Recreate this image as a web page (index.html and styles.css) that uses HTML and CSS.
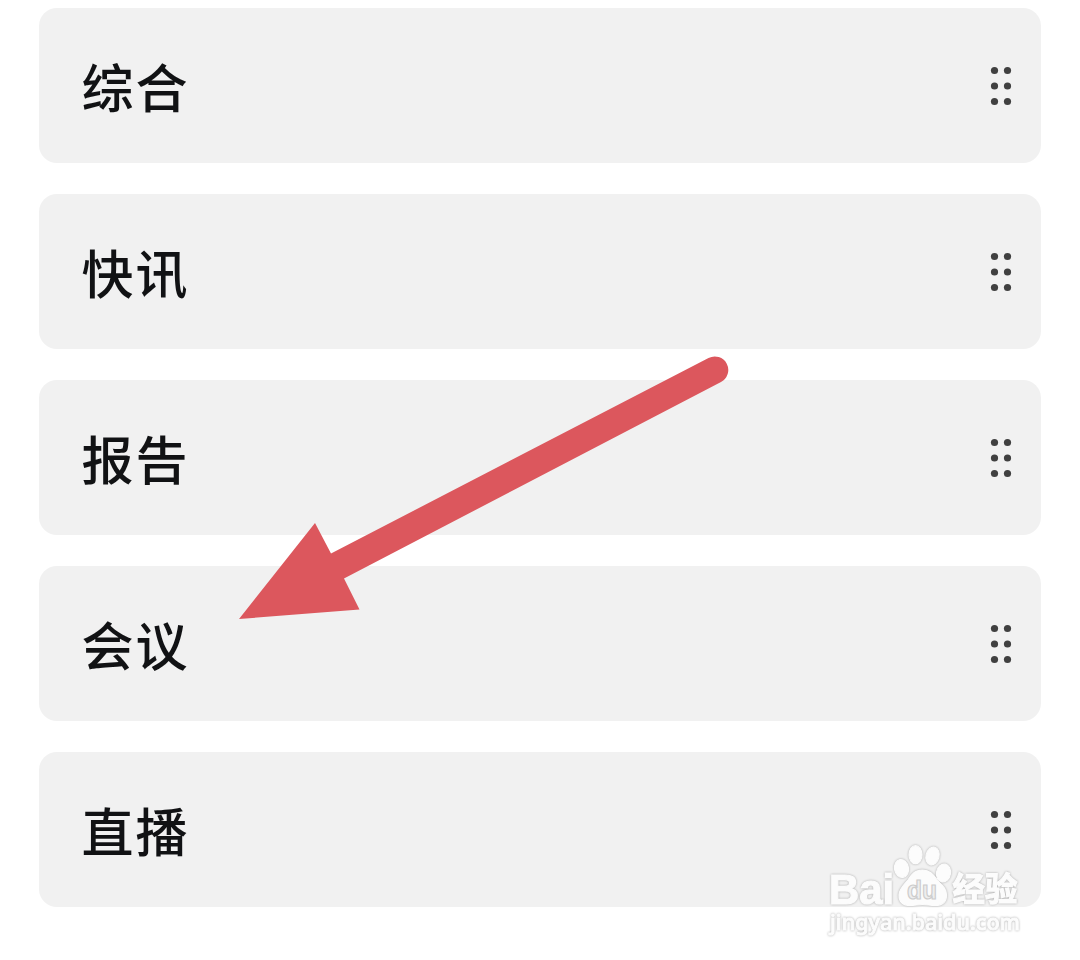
FILE: index.html
```html
<!DOCTYPE html>
<html lang="zh-CN">
<head>
  <meta charset="UTF-8" />
  <meta name="viewport" content="width=device-width,initial-scale=1.0" />
  <title>频道管理</title>
  <link rel="stylesheet" href="styles.css">
</head>
<body>
  <svg class="defs" aria-hidden="true">
    <symbol id="grip" viewBox="0 0 22 40">
      <circle cx="4.5" cy="4.5" r="3.6" /><circle cx="17.5" cy="4.5" r="3.6" />
      <circle cx="4.5" cy="20" r="3.6" /><circle cx="17.5" cy="20" r="3.6" />
      <circle cx="4.5" cy="35.5" r="3.6" /><circle cx="17.5" cy="35.5" r="3.6" />
    </symbol>
  </svg>
  <main>
    <ul class="channels">
      <li class="channel"><span>综合</span><svg class="grip"><use href="#grip" /></svg></li>
      <li class="channel"><span>快讯</span><svg class="grip"><use href="#grip" /></svg></li>
      <li class="channel"><span>报告</span><svg class="grip"><use href="#grip" /></svg></li>
      <li class="channel"><span>会议</span><svg class="grip"><use href="#grip" /></svg></li>
      <li class="channel"><span>直播</span><svg class="grip"><use href="#grip" /></svg></li>
    </ul>
  </main>

  <!-- pointer to the 会议 row -->
  <svg class="arrow" viewBox="0 0 500 270" aria-hidden="true">
    <path d="M4 264 L80 168 L96 198.500 L473.500 3 A13.500 13.500 0 0 1 486 27 L109 223.500 L124.500 254.500 Z" />
  </svg>

  <svg class="watermark" viewBox="0 0 230 120" aria-label="Baidu经验 jingyan.baidu.com">
    <text class="logo" x="19" y="74" font-size="42" textLength="65" lengthAdjust="spacingAndGlyphs">Bai</text>
    <g class="paw">
      <ellipse cx="91.500" cy="38.500" rx="7" ry="9" transform="rotate(-10 91.500 38.500)" />
      <ellipse cx="105.500" cy="24.700" rx="6.500" ry="9" />
      <ellipse cx="122.500" cy="26" rx="6.500" ry="9" transform="rotate(14 122.500 26)" />
      <ellipse cx="133.500" cy="43" rx="7" ry="9" transform="rotate(10 133.500 43)" />
      <path d="M112.500 40 C121 40 124 46 128 51 C133 56 136.500 59 136.500 65 C136.500 72 132 75.500 125 75.500 C120 75.500 117 74.500 112.500 74.500 C108 74.500 105 75.500 100 75.500 C93 75.500 89 72 89 65 C89 59 94 55 98 50 C102 44 105 40 112.500 40 Z" />
    </g>
    <text class="logo du" x="97" y="69" font-size="26" textLength="30" lengthAdjust="spacingAndGlyphs">du</text>
    <text class="logo cjk" x="142.500" y="71" font-size="33" textLength="65" lengthAdjust="spacingAndGlyphs">经验</text>
    <text class="site" x="20" y="100" font-size="21.500" textLength="190" lengthAdjust="spacingAndGlyphs">jingyan.baidu.com</text>
  </svg>
</body>
</html>
```

FILE: styles.css
```css
:root {
  --card: #f1f1f1;
  --ink: #111214;
  --arrow: #dc575d;
}
body {
  position: relative;
  height: 960px;
  margin: 0;
  overflow: hidden;
  background: #fff;
  color: var(--ink);
  font-family: "Noto Sans CJK SC", sans-serif;
}
.defs { position: absolute; width: 0; height: 0; }
.channels {
  display: flex;
  flex-direction: column;
  gap: 30.6px;
  margin: 0;
  padding: 8px 39px 0;
  list-style: none;
}
.channel {
  display: flex;
  align-items: center;
  justify-content: space-between;
  box-sizing: border-box;
  height: 155.4px;
  padding: 0 29px 0 42.5px;
  border-radius: 18px;
  background: var(--card);
}
.channel span {
  font-size: 52px;
  font-weight: 500;
  letter-spacing: 2px;
  line-height: 1;
}
.grip {
  width: 22px;
  height: 40px;
  fill: #404040;
}
.arrow {
  position: absolute;
  left: 235px;
  top: 355px;
  width: 500px;
  height: 270px;
  fill: var(--arrow);
}

.watermark {
  position: absolute;
  left: 810px;
  top: 830px;
  width: 230px;
  height: 120px;
}
.watermark text,
.paw {
  fill: #fcfcfc;
  stroke: #fcfcfc;
  stroke-width: 1.2px;
  filter: drop-shadow(0 0 0.8px #aaa);
}
.logo { font-family: "Liberation Sans", sans-serif; font-weight: 700; }
.watermark .du {
  fill: #eee;
  stroke: #ccc;
  filter: none;
}
.watermark .cjk { font-family: "Noto Sans CJK SC", sans-serif; }
.watermark .site {
  font-family: "Noto Sans", sans-serif;
  font-weight: 500;
  stroke-width: 1px;
  filter: drop-shadow(0 0 0.8px #aaa);
}
```
